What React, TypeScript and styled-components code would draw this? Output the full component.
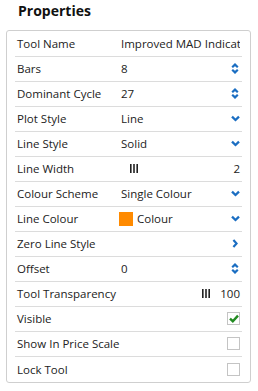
import React from "react"
import styled, { createGlobalStyle } from "styled-components"

const GlobalStyle = createGlobalStyle`
  html, body {
    margin: 0;
    padding: 0;
    background: #fff;
  }
  body {
    font-family: "Open Sans", "Liberation Sans", sans-serif;
    color: #222;
  }
`

const Blue = "#1b6ec2"

type Control =
  | { kind: "text"; value: string }
  | { kind: "spin"; value: string }
  | { kind: "select"; value: string; swatch?: string }
  | { kind: "link" }
  | { kind: "slider"; value: number; min: number; max: number }
  | { kind: "check"; checked: boolean }

interface Prop {
  label: string
  control: Control
}

const props: Prop[] = [
  { label: "Tool Name", control: { kind: "text", value: "Improved MAD Indicator" } },
  { label: "Bars", control: { kind: "spin", value: "8" } },
  { label: "Dominant Cycle", control: { kind: "spin", value: "27" } },
  { label: "Plot Style", control: { kind: "select", value: "Line" } },
  { label: "Line Style", control: { kind: "select", value: "Solid" } },
  { label: "Line Width", control: { kind: "slider", value: 2, min: 1, max: 10 } },
  { label: "Colour Scheme", control: { kind: "select", value: "Single Colour" } },
  { label: "Line Colour", control: { kind: "select", value: "Colour", swatch: "#ff8a00" } },
  { label: "Zero Line Style", control: { kind: "link" } },
  { label: "Offset", control: { kind: "spin", value: "0" } },
  { label: "Tool Transparency", control: { kind: "slider", value: 100, min: 0, max: 100 } },
  { label: "Visible", control: { kind: "check", checked: true } },
  { label: "Show In Price Scale", control: { kind: "check", checked: false } },
  { label: "Lock Tool", control: { kind: "check", checked: false } },
]

const SpinIcon = () => (
  <svg width="8" height="11" viewBox="0 0 8 11">
    <path d="M1.2 4.2 L4 1.6 L6.8 4.2 M1.2 6.8 L4 9.4 L6.8 6.8" fill="none" stroke={Blue} strokeWidth="2.2" />
  </svg>
)

const ChevronDown = () => (
  <svg width="9" height="7" viewBox="0 0 9 7">
    <path d="M1 1.6 L4.5 5 L8 1.6" fill="none" stroke={Blue} strokeWidth="2.3" />
  </svg>
)

const ChevronRight = () => (
  <svg width="6" height="9" viewBox="0 0 6 9">
    <path d="M1.4 1 L4.6 4.5 L1.4 8" fill="none" stroke={Blue} strokeWidth="2.2" />
  </svg>
)

const Grip = () => (
  <svg width="8" height="9" viewBox="0 0 8 9">
    <rect x="0" y="0" width="1.6" height="9" fill="#222" />
    <rect x="3.2" y="0" width="1.6" height="9" fill="#222" />
    <rect x="6.4" y="0" width="1.6" height="9" fill="#222" />
  </svg>
)

const Tick = () => (
  <svg width="10" height="9" viewBox="0 0 10 9">
    <path d="M1 4.6 L3.8 7.2 L9 1.6" fill="none" stroke="#228b22" strokeWidth="2.4" />
  </svg>
)

const renderControl = (c: Control) => {
  switch (c.kind) {
    case "text":
      return <S.Value><S.Clip>{c.value}</S.Clip></S.Value>
    case "spin":
      return (
        <S.Value>
          <S.Grow>{c.value}</S.Grow>
          <S.Icon><SpinIcon /></S.Icon>
        </S.Value>
      )
    case "select":
      return (
        <S.Value>
          {c.swatch && <S.Swatch color={c.swatch} />}
          <S.Grow>{c.value}</S.Grow>
          <S.Icon><ChevronDown /></S.Icon>
        </S.Value>
      )
    case "link":
      return (
        <S.Value>
          <S.Grow />
          <S.Icon><ChevronRight /></S.Icon>
        </S.Value>
      )
    case "slider": {
      const pct = (c.value - c.min) / (c.max - c.min)
      return (
        <S.Value>
          <S.Track>
            <S.Thumb style={{ left: `calc(${pct * 100}% - ${pct * 8}px)` }}>
              <Grip />
            </S.Thumb>
          </S.Track>
          <S.Number>{c.value}</S.Number>
        </S.Value>
      )
    }
    case "check":
      return (
        <S.Value>
          <S.Grow />
          <S.Box>{c.checked && <Tick />}</S.Box>
        </S.Value>
      )
  }
}

export default function App() {
  return (
    <>
      <GlobalStyle />
      <S.Page>
        <S.Title>Properties</S.Title>
        <S.Panel>
          {props.map((p) => (
            <S.Row key={p.label}>
              <S.Label>{p.label}</S.Label>
              {renderControl(p.control)}
            </S.Row>
          ))}
        </S.Panel>
      </S.Page>
    </>
  )
}

const S = {
  Page: styled.div`
    width: 258px;
    padding: 1px 0 0 6px;
    box-sizing: border-box;
  `,
  Title: styled.div`
    padding-left: 12px;
    height: 20px;
    line-height: 20px;
    font-size: 14px;
    font-weight: 700;
    color: #111;
    margin-bottom: 9px;
  `,
  Panel: styled.div`
    width: 245px;
    box-sizing: border-box;
    border: 1px solid #cfcfcf;
    border-radius: 3px;
    padding: 1px 8px 0;
  `,
  Row: styled.div`
    display: flex;
    align-items: center;
    height: 25px;
    box-sizing: border-box;
    padding: 0 2px 1px;
    border-bottom: 1px solid #dcdcdc;
    font-size: 11.5px;
    &:last-child {
      border-bottom: none;
    }
  `,
  Label: styled.div`
    width: 104px;
    flex: none;
    white-space: nowrap;
  `,
  Value: styled.div`
    flex: 1;
    min-width: 0;
    display: flex;
    align-items: center;
  `,
  Clip: styled.div`
    overflow: hidden;
    white-space: nowrap;
    text-overflow: clip;
  `,
  Grow: styled.div`
    flex: 1;
    white-space: nowrap;
  `,
  Icon: styled.div`
    display: flex;
    align-items: center;
    justify-content: center;
    width: 10px;
  `,
  Swatch: styled.div<{ color: string }>`
    width: 14px;
    height: 14px;
    background: ${({ color }) => color};
    margin: 0 4px 0 -2px;
  `,
  Track: styled.div`
    position: relative;
    flex: 1;
    height: 9px;
  `,
  Thumb: styled.div`
    position: absolute;
    top: 0;
    display: flex;
  `,
  Number: styled.div`
    width: 30px;
    text-align: right;
  `,
  Box: styled.div`
    width: 11px;
    height: 11px;
    border: 1px solid #c4c4c4;
    display: flex;
    align-items: center;
    justify-content: center;
  `,
}
